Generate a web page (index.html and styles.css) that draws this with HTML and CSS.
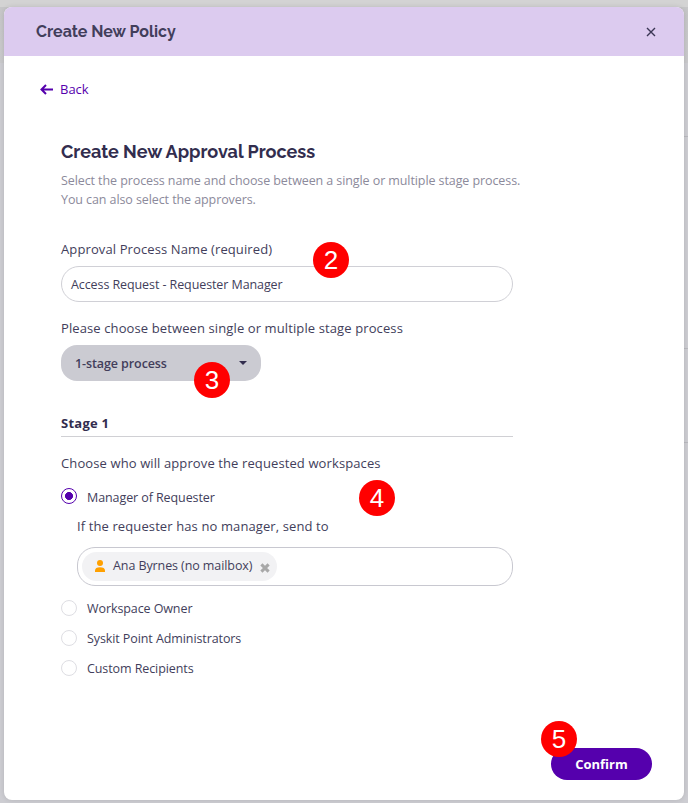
FILE: index.html
```html
<!DOCTYPE html>
<html lang="en">
<head>
<meta charset="utf-8">
<title>Create New Policy</title>
<link rel="stylesheet" href="styles.css">
</head>
<body>
<div class="backdrop"></div>
<main class="modal">
  <header class="modal-header">
    <h1 class="modal-title">Create New Policy</h1>
    <svg class="close" viewBox="0 0 10 10"><path d="M1 1l8 8M9 1L1 9"/></svg>
  </header>
  <div class="back">
    <svg class="back-icon" viewBox="0 0 13 11"><path d="M13 5.5H1.6M6 1L1.5 5.5 6 10"/></svg>
    <span class="back-label">Back</span>
  </div>
  <section class="content">
    <h2 class="heading">Create New Approval Process</h2>
    <p class="intro">Select the process name and choose between a single or multiple stage process.<br>You can also select the approvers.</p>
    <div class="label name-label">Approval Process Name (required)</div>
    <div class="input"><span>Access Request - Requester Manager</span><b class="callout c2">2</b></div>
    <div class="label stage-label">Please choose between single or multiple stage process</div>
    <div class="select"><span>1-stage process</span><i class="caret"></i><b class="callout c3">3</b></div>
    <h3 class="stage">Stage 1</h3>
    <div class="label who-label">Choose who will approve the requested workspaces</div>
    <div class="option first"><i class="radio on"></i><span>Manager of Requester</span><b class="callout c4">4</b></div>
    <div class="label sub-label">If the requester has no manager, send to</div>
    <div class="picker">
      <div class="chip">
        <svg class="person" viewBox="0 0 10 12"><circle cx="5" cy="3" r="3"/><path d="M0 12V10.6C0 8.4 1.8 7.2 5 7.2s5 1.2 5 3.4V12z"/></svg>
        <span class="chip-name">Ana Byrnes (no mailbox)</span>
        <svg class="remove" viewBox="0 0 10 10"><path d="M1.4 1.4l7.2 7.2M8.6 1.4L1.4 8.6"/></svg>
      </div>
    </div>
    <div class="option"><i class="radio"></i><span>Workspace Owner</span></div>
    <div class="option"><i class="radio"></i><span>Syskit Point Administrators</span></div>
    <div class="option"><i class="radio"></i><span>Custom Recipients</span></div>
  </section>
  <footer class="footer">
    <div class="confirm"><span>Confirm</span><b class="callout c5">5</b></div>
  </footer>
</main>
</body>
</html>
```
FILE: styles.css
```css
* { box-sizing: border-box; }
body {
  margin: 0;
  height: 803px;
  padding: 7px 4px 3px;
  overflow: hidden;
  background: linear-gradient(#d3d3d3 7px, #c6c6c8 7px, #c9c9cb 63px, #cdcdd2 63px);
  font-family: "Open Sans", "Noto Sans", sans-serif;
  font-size: 12.5px;
  letter-spacing: -.09px;
  color: #423e5b;
}
.backdrop {
  position: absolute;
  right: 0;
  top: 136px;
  width: 4px;
  height: 307px;
  background: linear-gradient(#b9b9be 1px, transparent 1px 212px, #b9b9be 212px 213px, transparent 213px 306px, #b9b9be 306px);
}
.modal {
  position: relative;
  height: 793px;
  display: flex;
  flex-direction: column;
  background: #fff;
  border-radius: 8px;
  box-shadow: 0 0 5px rgba(0, 0, 0, .12);
}
.modal-header {
  height: 49px;
  padding: 0 28px 0 32px;
  display: flex;
  align-items: center;
  justify-content: space-between;
  background: #dccbef;
  border-radius: 8px 8px 0 0;
}
.modal-title, .heading {
  margin: 0;
  font-family: Raleway, Lato, sans-serif;
  font-weight: 700;
  letter-spacing: 0;
  white-space: nowrap;
}
.modal-title { font-size: 16px; }
.close { width: 10px; height: 10px; fill: none; stroke: #3a3654; stroke-width: 1.4; }
.back {
  height: 20px;
  margin: 23px 0 0 36px;
  display: flex;
  align-items: center;
  gap: 7px;
  font-size: 13px;
  letter-spacing: 0;
  color: #5500ad;
}
.back-icon { width: 13px; height: 11px; fill: none; stroke: #5500ad; stroke-width: 2; }
.content { width: 452px; margin-left: 57px; white-space: nowrap; }
.heading { margin-top: 40px; font-size: 18px; line-height: 26px; color: #322d4e; }
.intro { margin: 6px 0 0; line-height: 19px; color: #8c8a9b; }
.label { height: 20px; line-height: 20px; font-size: 13px; letter-spacing: .11px; }
.name-label { margin-top: 30px; }
.input {
  position: relative;
  height: 36px;
  margin-top: 7px;
  padding-left: 9px;
  line-height: 35px;
  border: 1px solid #d0d0d6;
  border-radius: 18px;
}
.stage-label { margin-top: 16px; }
.select {
  position: relative;
  width: 200px;
  height: 36px;
  margin-top: 7px;
  padding: 0 14px;
  display: flex;
  align-items: center;
  justify-content: space-between;
  background: #cbcbd2;
  border-radius: 16px;
  font-weight: 600;
}
.caret { border: 4px solid transparent; border-top-color: #322d4e; border-bottom: 0; }
.stage {
  height: 24px;
  margin: 32px 0 0;
  border-bottom: 1px solid #d0d0d4;
  font-size: 13px;
  line-height: 20px;
  letter-spacing: .25px;
  color: #322d4e;
}
.who-label { margin-top: 16px; }
.option { position: relative; height: 20px; margin-top: 10px; display: flex; align-items: center; gap: 10px; }
.option.first { margin-top: 14px; }
.radio { width: 16px; height: 16px; border: 1px solid #dedee3; border-radius: 50%; }
.radio.on {
  margin-bottom: 2px;
  border: 1.5px solid #5500ad;
  background: radial-gradient(circle, #5500ad 3.7px, transparent 4.3px);
}
.sub-label { margin: 9px 0 0 16px; }
.picker {
  height: 39px;
  margin: 11px 0 12px 16px;
  padding: 4px;
  border: 1px solid #c8c8d0;
  border-radius: 18px;
}
.chip {
  width: 195px;
  height: 29px;
  padding: 0 7px 0 13px;
  display: flex;
  align-items: center;
  background: #f2f2f4;
  border-radius: 15px;
}
.chip-name { margin-top: -2px; }
.person { width: 10px; height: 12px; margin: -2px 8px 0 0; fill: #ffa000; }
.remove { width: 10px; height: 10px; margin: 2px 0 0 auto; fill: none; stroke: #a8a8a8; stroke-width: 3; }
.footer { margin: auto 32px 20px 0; display: flex; justify-content: flex-end; }
.confirm {
  position: relative;
  width: 101px;
  height: 32px;
  line-height: 32px;
  text-align: center;
  background: #5500ad;
  color: #fff;
  border-radius: 16px;
  font-size: 13px;
  letter-spacing: 0;
  font-weight: 700;
}
.callout {
  position: absolute;
  width: 36px;
  height: 36px;
  border-radius: 50%;
  background: #f00;
  color: #fff;
  font: 400 26px/37px "Liberation Sans", sans-serif;
  letter-spacing: 0;
  text-align: center;
}
.c2 { left: 251px; top: -25px; }
.c3 { left: 133px; top: 17px; }
.c4 { left: 298px; top: -7px; }
.c5 { left: -10px; top: -27px; }
```
